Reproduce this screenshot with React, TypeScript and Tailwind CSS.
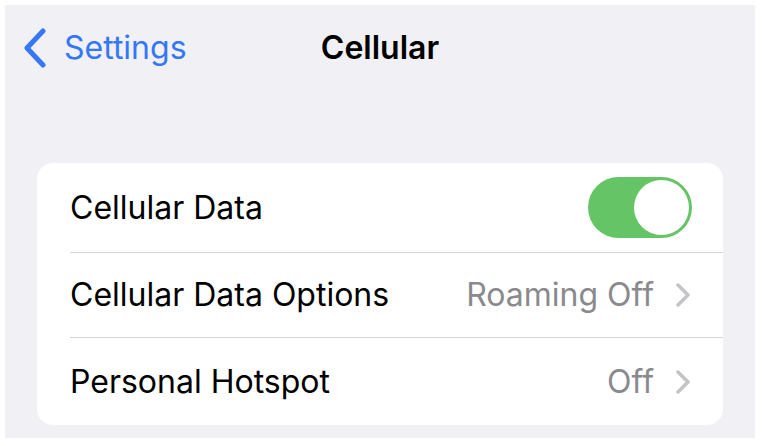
import React from "react";

function Chevron() {
  return (
    <svg width="16" height="24" viewBox="0 0 16 24" fill="none" className="shrink-0">
      <path d="M3 2 L13 12 L3 22" stroke="#c4c4c8" strokeWidth="3.5" strokeLinecap="round" strokeLinejoin="round" />
    </svg>
  );
}

function Toggle() {
  return (
    <div className="w-[104px] h-[61px] rounded-full bg-[#65c466] p-[3px] flex justify-end items-center">
      <div className="w-[55px] h-[55px] rounded-full bg-white" />
    </div>
  );
}

export default function App() {
  const font = { fontFamily: "Inter, 'Liberation Sans', sans-serif" };
  return (
    <div className="w-[762px] h-[446px] bg-white pt-[5px] pl-[5px] pr-[7px] pb-[8px]" style={font}>
      <div className="w-full h-full bg-[#f0f0f5] px-[32px]">
        <header className="h-[86px] grid grid-cols-[1fr_auto_1fr] items-center -mx-[32px] px-[18px]">
          <div className="flex items-center gap-[17px] text-[#3478f6]">
            <svg width="24" height="40" viewBox="0 0 24 40" fill="none">
              <path d="M20 3 L4 20 L20 37" stroke="#3478f6" strokeWidth="5" strokeLinecap="round" strokeLinejoin="round" />
            </svg>
            <span className="text-[32px]">Settings</span>
          </div>
          <h1 className="text-[32px] font-semibold text-black">Cellular</h1>
          <div />
        </header>

        <div className="mt-[72px] bg-white rounded-[16px] overflow-hidden">
          <div className="h-[89px] flex items-center justify-between pl-[33px] pr-[31px]">
            <span className="text-[32px] text-black">Cellular Data</span>
            <Toggle />
          </div>
          <div className="ml-[33px] border-t border-[#d6d6da]" />
          <div className="h-[84px] flex items-center justify-between pl-[33px] pr-[32px]">
            <span className="text-[32px] text-black">Cellular Data Options</span>
            <div className="flex items-center gap-[21px]">
              <span className="text-[32px] text-[#8a8a8e]">Roaming Off</span>
              <Chevron />
            </div>
          </div>
          <div className="ml-[33px] border-t border-[#d6d6da]" />
          <div className="h-[87px] flex items-center justify-between pl-[33px] pr-[32px]">
            <span className="text-[32px] text-black">Personal Hotspot</span>
            <div className="flex items-center gap-[21px]">
              <span className="text-[32px] text-[#8a8a8e]">Off</span>
              <Chevron />
            </div>
          </div>
        </div>
      </div>
    </div>
  );
}
